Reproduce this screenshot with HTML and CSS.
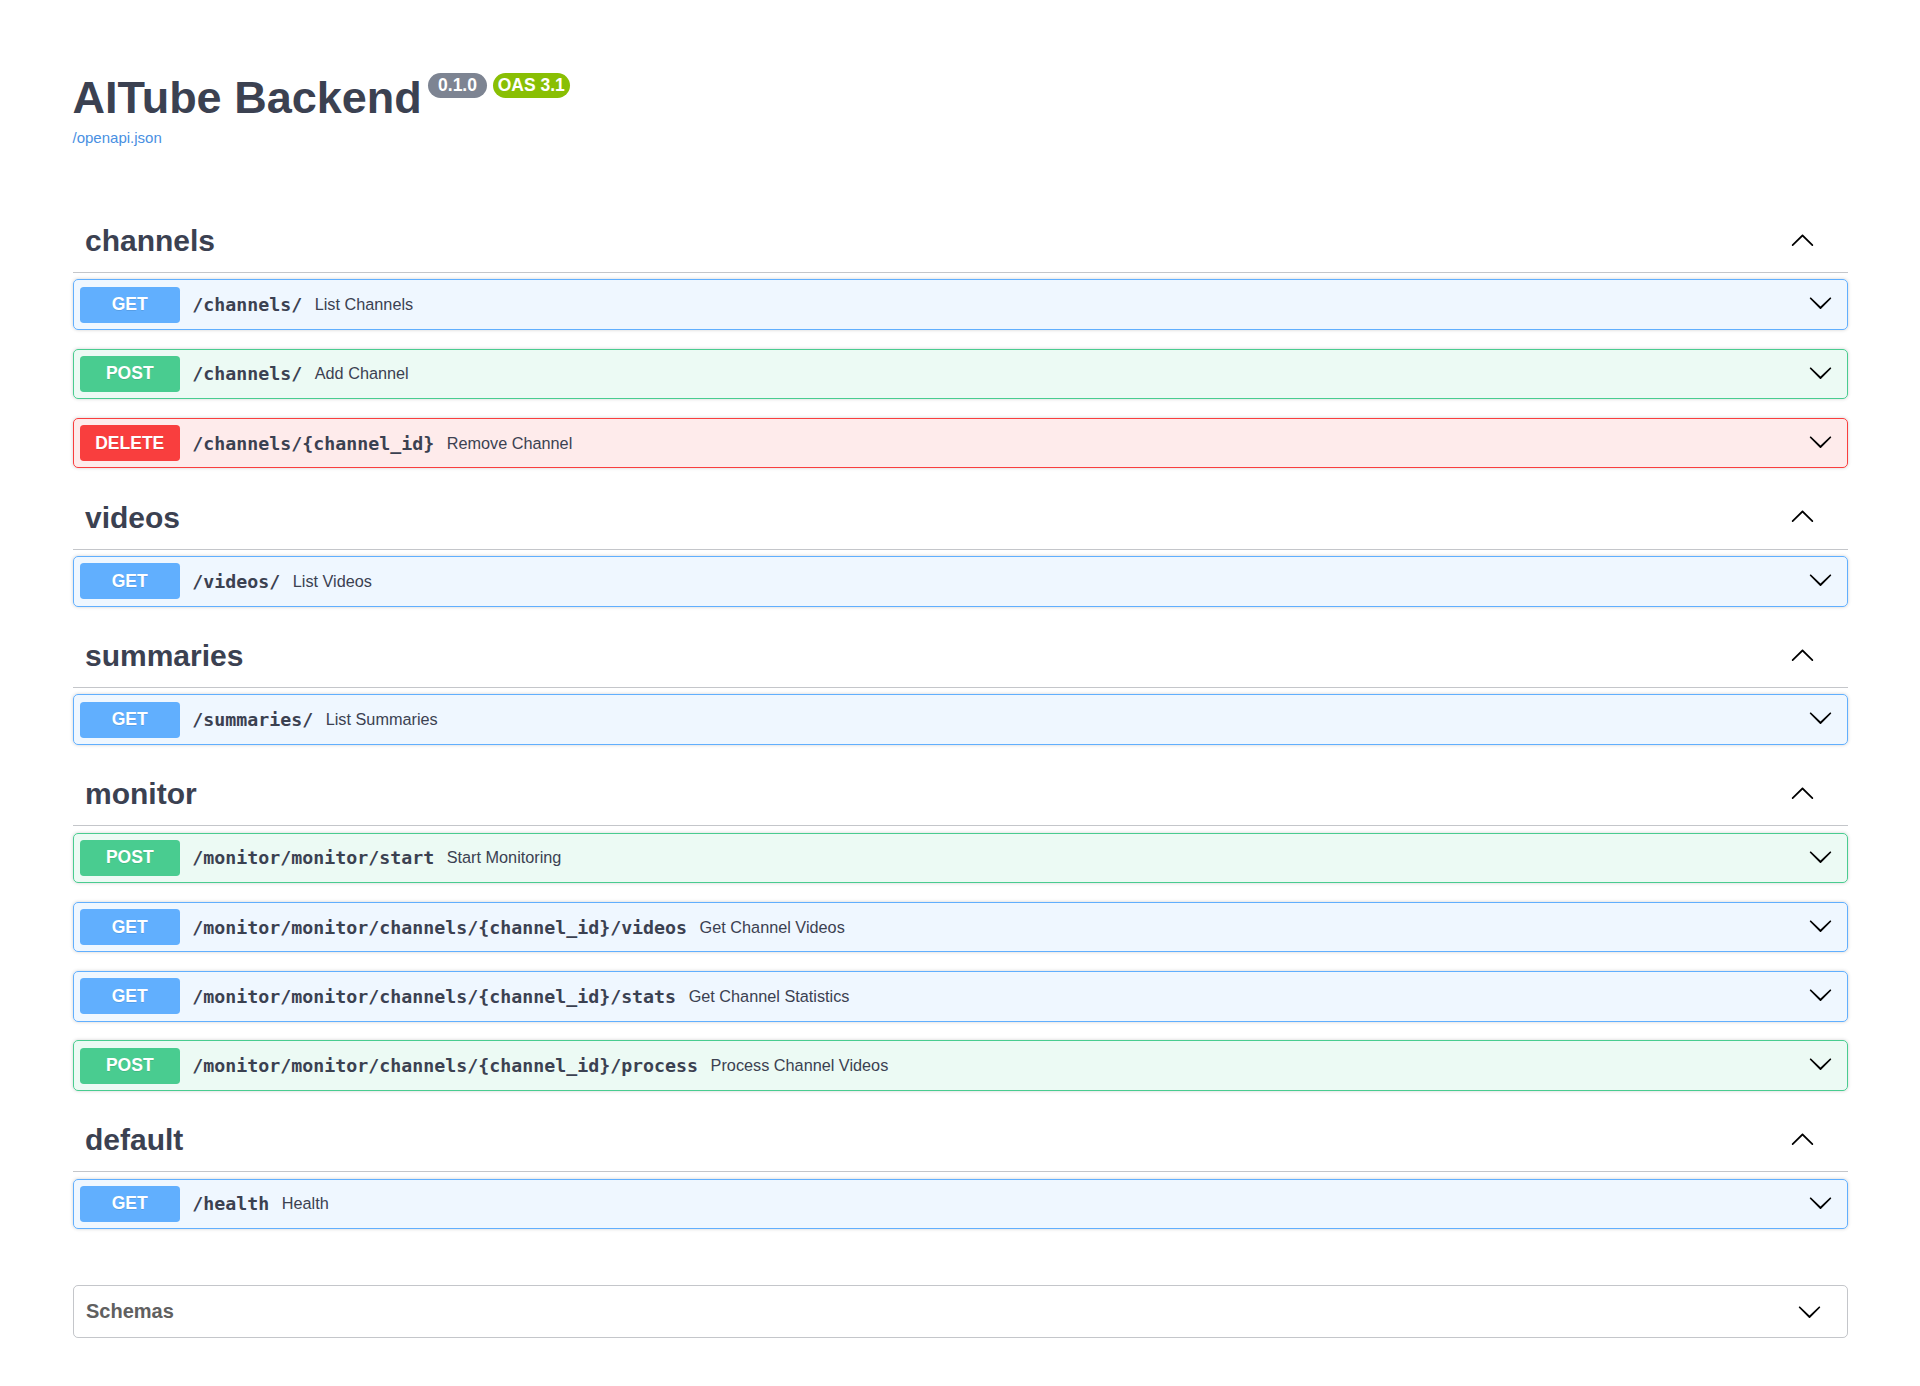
FILE: index.html
```html
<!DOCTYPE html>
<html lang="en">
<head>
<meta charset="utf-8">
<title>AITube Backend - Swagger UI</title>
<link rel="stylesheet" href="styles.css">
</head>
<body>
<div class="wrapper">
  <div class="info">
    <h2 class="title"><span class="title-text">AITube Backend</span><span class="stamps"><span class="stamp stamp-version"> 0.1.0 </span><span class="stamp stamp-oas">OAS 3.1</span></span></h2>
    <a class="spec-link" href="#">/openapi.json</a>
  </div>

  <div class="tag-section">
    <h3 class="tag"><span class="tag-name">channels</span><span class="tag-fill"></span><span class="tag-btn"><svg viewBox="0 0 20 20" width="25" height="25"><path d="M17.418 14.908c.272.268.709.268.979 0s.271-.701 0-.969l-7.908-7.83c-.27-.268-.707-.268-.979 0l-7.908 7.83c-.27.268-.27.701 0 .969.271.268.709.268.979 0L10 7.771l7.418 7.137z"/></svg></span></h3>
    <div class="op op-get"><span class="method">GET</span><span class="path">/channels/</span><span class="desc">List Channels</span><span class="op-fill"></span><span class="op-btn"><svg viewBox="0 0 20 20" width="25" height="25"><path d="M17.418 6.109c.272-.268.709-.268.979 0s.271.701 0 .969l-7.908 7.83c-.27.268-.707.268-.979 0l-7.908-7.83c-.27-.268-.27-.701 0-.969.271-.268.709-.268.979 0L10 13.25l7.418-7.141z"/></svg></span></div>
    <div class="op op-post"><span class="method">POST</span><span class="path">/channels/</span><span class="desc">Add Channel</span><span class="op-fill"></span><span class="op-btn"><svg viewBox="0 0 20 20" width="25" height="25"><path d="M17.418 6.109c.272-.268.709-.268.979 0s.271.701 0 .969l-7.908 7.83c-.27.268-.707.268-.979 0l-7.908-7.83c-.27-.268-.27-.701 0-.969.271-.268.709-.268.979 0L10 13.25l7.418-7.141z"/></svg></span></div>
    <div class="op op-delete"><span class="method">DELETE</span><span class="path">/channels/{channel_id}</span><span class="desc">Remove Channel</span><span class="op-fill"></span><span class="op-btn"><svg viewBox="0 0 20 20" width="25" height="25"><path d="M17.418 6.109c.272-.268.709-.268.979 0s.271.701 0 .969l-7.908 7.83c-.27.268-.707.268-.979 0l-7.908-7.83c-.27-.268-.27-.701 0-.969.271-.268.709-.268.979 0L10 13.25l7.418-7.141z"/></svg></span></div>
  </div>

  <div class="tag-section">
    <h3 class="tag"><span class="tag-name">videos</span><span class="tag-fill"></span><span class="tag-btn"><svg viewBox="0 0 20 20" width="25" height="25"><path d="M17.418 14.908c.272.268.709.268.979 0s.271-.701 0-.969l-7.908-7.83c-.27-.268-.707-.268-.979 0l-7.908 7.83c-.27.268-.27.701 0 .969.271.268.709.268.979 0L10 7.771l7.418 7.137z"/></svg></span></h3>
    <div class="op op-get"><span class="method">GET</span><span class="path">/videos/</span><span class="desc">List Videos</span><span class="op-fill"></span><span class="op-btn"><svg viewBox="0 0 20 20" width="25" height="25"><path d="M17.418 6.109c.272-.268.709-.268.979 0s.271.701 0 .969l-7.908 7.83c-.27.268-.707.268-.979 0l-7.908-7.83c-.27-.268-.27-.701 0-.969.271-.268.709-.268.979 0L10 13.25l7.418-7.141z"/></svg></span></div>
  </div>

  <div class="tag-section">
    <h3 class="tag"><span class="tag-name">summaries</span><span class="tag-fill"></span><span class="tag-btn"><svg viewBox="0 0 20 20" width="25" height="25"><path d="M17.418 14.908c.272.268.709.268.979 0s.271-.701 0-.969l-7.908-7.83c-.27-.268-.707-.268-.979 0l-7.908 7.83c-.27.268-.27.701 0 .969.271.268.709.268.979 0L10 7.771l7.418 7.137z"/></svg></span></h3>
    <div class="op op-get"><span class="method">GET</span><span class="path">/summaries/</span><span class="desc">List Summaries</span><span class="op-fill"></span><span class="op-btn"><svg viewBox="0 0 20 20" width="25" height="25"><path d="M17.418 6.109c.272-.268.709-.268.979 0s.271.701 0 .969l-7.908 7.83c-.27.268-.707.268-.979 0l-7.908-7.83c-.27-.268-.27-.701 0-.969.271-.268.709-.268.979 0L10 13.25l7.418-7.141z"/></svg></span></div>
  </div>

  <div class="tag-section">
    <h3 class="tag"><span class="tag-name">monitor</span><span class="tag-fill"></span><span class="tag-btn"><svg viewBox="0 0 20 20" width="25" height="25"><path d="M17.418 14.908c.272.268.709.268.979 0s.271-.701 0-.969l-7.908-7.83c-.27-.268-.707-.268-.979 0l-7.908 7.83c-.27.268-.27.701 0 .969.271.268.709.268.979 0L10 7.771l7.418 7.137z"/></svg></span></h3>
    <div class="op op-post"><span class="method">POST</span><span class="path">/monitor/monitor/start</span><span class="desc">Start Monitoring</span><span class="op-fill"></span><span class="op-btn"><svg viewBox="0 0 20 20" width="25" height="25"><path d="M17.418 6.109c.272-.268.709-.268.979 0s.271.701 0 .969l-7.908 7.83c-.27.268-.707.268-.979 0l-7.908-7.83c-.27-.268-.27-.701 0-.969.271-.268.709-.268.979 0L10 13.25l7.418-7.141z"/></svg></span></div>
    <div class="op op-get"><span class="method">GET</span><span class="path">/monitor/monitor/channels/{channel_id}/videos</span><span class="desc">Get Channel Videos</span><span class="op-fill"></span><span class="op-btn"><svg viewBox="0 0 20 20" width="25" height="25"><path d="M17.418 6.109c.272-.268.709-.268.979 0s.271.701 0 .969l-7.908 7.83c-.27.268-.707.268-.979 0l-7.908-7.83c-.27-.268-.27-.701 0-.969.271-.268.709-.268.979 0L10 13.25l7.418-7.141z"/></svg></span></div>
    <div class="op op-get"><span class="method">GET</span><span class="path">/monitor/monitor/channels/{channel_id}/stats</span><span class="desc">Get Channel Statistics</span><span class="op-fill"></span><span class="op-btn"><svg viewBox="0 0 20 20" width="25" height="25"><path d="M17.418 6.109c.272-.268.709-.268.979 0s.271.701 0 .969l-7.908 7.83c-.27.268-.707.268-.979 0l-7.908-7.83c-.27-.268-.27-.701 0-.969.271-.268.709-.268.979 0L10 13.25l7.418-7.141z"/></svg></span></div>
    <div class="op op-post"><span class="method">POST</span><span class="path">/monitor/monitor/channels/{channel_id}/process</span><span class="desc">Process Channel Videos</span><span class="op-fill"></span><span class="op-btn"><svg viewBox="0 0 20 20" width="25" height="25"><path d="M17.418 6.109c.272-.268.709-.268.979 0s.271.701 0 .969l-7.908 7.83c-.27.268-.707.268-.979 0l-7.908-7.83c-.27-.268-.27-.701 0-.969.271-.268.709-.268.979 0L10 13.25l7.418-7.141z"/></svg></span></div>
  </div>

  <div class="tag-section">
    <h3 class="tag"><span class="tag-name">default</span><span class="tag-fill"></span><span class="tag-btn"><svg viewBox="0 0 20 20" width="25" height="25"><path d="M17.418 14.908c.272.268.709.268.979 0s.271-.701 0-.969l-7.908-7.83c-.27-.268-.707-.268-.979 0l-7.908 7.83c-.27.268-.27.701 0 .969.271.268.709.268.979 0L10 7.771l7.418 7.137z"/></svg></span></h3>
    <div class="op op-get"><span class="method">GET</span><span class="path">/health</span><span class="desc">Health</span><span class="op-fill"></span><span class="op-btn"><svg viewBox="0 0 20 20" width="25" height="25"><path d="M17.418 6.109c.272-.268.709-.268.979 0s.271.701 0 .969l-7.908 7.83c-.27.268-.707.268-.979 0l-7.908-7.83c-.27-.268-.27-.701 0-.969.271-.268.709-.268.979 0L10 13.25l7.418-7.141z"/></svg></span></div>
  </div>

  <section class="models">
    <h4 class="models-head"><span class="models-title">Schemas</span><span class="op-fill"></span><svg class="models-arrow" viewBox="0 0 20 20" width="25" height="25"><path d="M17.418 6.109c.272-.268.709-.268.979 0s.271.701 0 .969l-7.908 7.83c-.27.268-.707.268-.979 0l-7.908-7.83c-.27-.268-.27-.701 0-.969.271-.268.709-.268.979 0L10 13.25l7.418-7.141z"/></svg></h4>
  </section>
</div>
</body>
</html>
```

FILE: styles.css
```css
html, body {
  margin: 0;
  padding: 0;
  background: #ffffff;
}

body {
  font-family: "Liberation Sans", Arial, sans-serif;
  color: #3b4151;
}

.wrapper {
  box-sizing: border-box;
  max-width: 1825px;
  width: 100%;
  margin: 0 auto;
  padding: 0 25px;
}

/* ---------- info ---------- */
.info {
  padding-top: 72px;
  padding-bottom: 64px;
}

.title {
  display: flex;
  align-items: flex-start;
  margin: 0;
  font-size: 45px;
  line-height: 51.7px;
  font-weight: 700;
  color: #3b4151;
}

.stamps {
  display: flex;
  gap: 5.5px;
  margin-left: 6.25px;
  margin-top: 0.5px;
}

.stamp {
  display: block;
  padding: 2.5px 5.2px;
  border-radius: 71px;
  font-size: 17.5px;
  line-height: 20.1px;
  font-weight: 700;
  color: #ffffff;
  white-space: pre;
}

.stamp-version {
  background: #7d8492;
}

.stamp-oas {
  background: #89bf04;
}

.spec-link {
  display: block;
  margin-top: 5.5px;
  font-size: 15px;
  line-height: 17.25px;
  color: #4990e2;
  text-decoration: none;
  width: max-content;
}

/* ---------- tags ---------- */
.tag-section {
  display: flex;
  flex-direction: column;
}

.tag {
  display: flex;
  align-items: center;
  margin: 0 0 6.25px;
  padding: 12.5px 25px 12.5px 12.5px;
  border-bottom: 1px solid rgba(59, 65, 81, 0.3);
  font-size: 30px;
  font-weight: 700;
  line-height: 34.5px;
  color: #3b4151;
}

.tag-fill {
  flex: 1;
}

.tag-btn {
  display: block;
  height: 25px;
  padding: 3.75px 7.5px 8px;
}

.tag-btn svg {
  display: block;
  fill: #000000;
}

/* ---------- operations ---------- */
.op {
  display: flex;
  align-items: center;
  margin: 0 0 18.75px;
  padding: 6.25px;
  border: 1px solid;
  border-radius: 5px;
  box-shadow: 0 0 3.75px rgba(0, 0, 0, 0.19);
}

.op-get {
  border-color: #61affe;
  background: rgba(97, 175, 254, 0.1);
}

.op-get .method {
  background: #61affe;
}

.op-post {
  border-color: #49cc90;
  background: rgba(73, 204, 144, 0.1);
}

.op-post .method {
  background: #49cc90;
}

.op-delete {
  border-color: #f93e3e;
  background: rgba(249, 62, 62, 0.1);
}

.op-delete .method {
  background: #f93e3e;
}

.method {
  display: block;
  min-width: 100px;
  padding: 7.5px 0;
  border-radius: 3.75px;
  font-size: 17.5px;
  line-height: 21px;
  font-weight: 700;
  text-align: center;
  color: #ffffff;
  text-shadow: 0 1.25px 0 rgba(0, 0, 0, 0.1);
}

.path {
  padding: 0 12.5px;
  font-family: "DejaVu Sans Mono", "Liberation Mono", monospace;
  font-size: 18.27px;
  font-weight: 700;
  color: #3b4151;
}

.desc {
  font-size: 16.25px;
  color: #3b4151;
}

.op-fill {
  flex: 1;
}

.op-btn {
  display: block;
  padding: 0 7px 3.5px 12.5px;
}

.op-btn svg {
  display: block;
  fill: #000000;
}

/* ---------- models ---------- */
.models {
  margin: 37.5px 0;
  border: 1px solid rgba(59, 65, 81, 0.3);
  border-radius: 5px;
}

.models-head {
  display: flex;
  align-items: flex-start;
  margin: 0;
  padding: 12.5px 25px 12.5px 12.5px;
  font-size: 20px;
  line-height: 25px;
  font-weight: 700;
  color: #606060;
}

.models-arrow {
  display: block;
  margin-top: 0.5px;
  fill: #000000;
}
```
